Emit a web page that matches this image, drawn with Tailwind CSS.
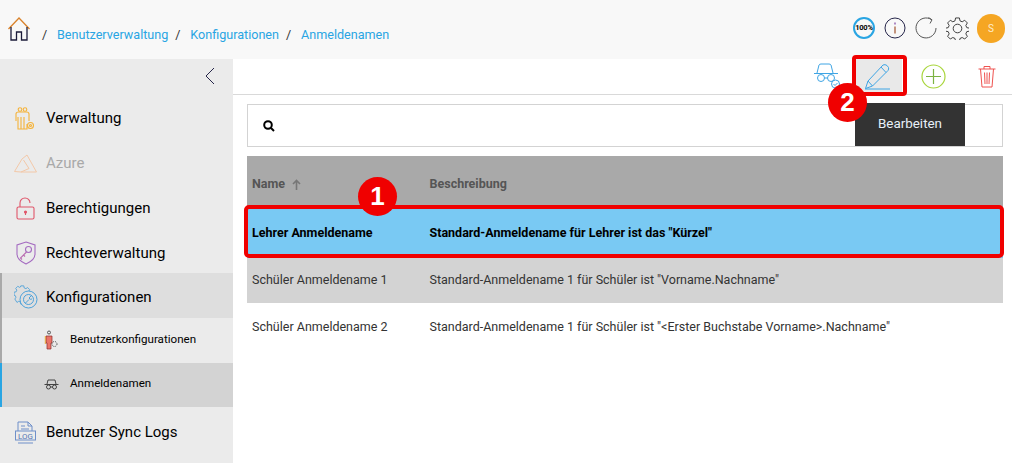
<!DOCTYPE html>
<html lang="de">
<head>
  <meta charset="UTF-8" />
  <title>Anmeldenamen</title>
  <script src="https://cdn.jsdelivr.net/npm/@tailwindcss/browser@4"></script>
</head>
<body class="h-[463px] w-[1012px] overflow-hidden bg-white font-['Roboto',sans-serif] text-black relative">

  <!-- top bar -->
  <header class="h-[59px] bg-[#f8f8f8] flex items-center pl-[8px] pr-[7px]">
    <svg class="w-[22px] h-[24px] -mt-[2px]" viewBox="0 0 22 24" fill="none" stroke-width="1.300">
      <path d="M.5 12 L11 1 L21.500 12" stroke="#d9822b"/>
      <path d="M3 10 V23 H8.500 V15 H13.500 V23 H19 V10" stroke="#1b1b3a"/>
    </svg>
    <nav class="flex items-center text-[12.6px] ml-[12px] mt-[11px]">
      <span class="text-[#333] w-[15px]">/</span>
      <a class="text-[#29a5e3]">Benutzerverwaltung</a>
      <span class="text-[#333] ml-[7px] w-[15px]">/</span>
      <a class="text-[#29a5e3]">Konfigurationen</a>
      <span class="text-[#333] ml-[7px] w-[15px]">/</span>
      <a class="text-[#29a5e3]">Anmeldenamen</a>
    </nav>
    <div class="ml-auto flex items-center gap-[9px] -mt-[3px]">
      <div class="w-[22px] h-[22px] rounded-full border-2 border-[#29a5e3] flex items-center justify-center text-[7.5px] font-bold leading-none tracking-tight">100%</div>
      <svg class="w-[22px] h-[22px]" viewBox="0 0 22 22" fill="none">
        <circle cx="11" cy="11" r="10" stroke="#26264a"/>
        <path d="M11 9.500V16.500" stroke="#a0522d" stroke-width="1.200"/>
        <path d="M11 5.500V7.500" stroke="#7b3fa0" stroke-width="1.200"/>
      </svg>
      <svg class="w-[22px] h-[22px]" viewBox="0 0 22 22" fill="none" stroke="#555">
        <path d="M16.500 2.600 A10 10 0 1 0 21 11"/>
        <path d="M13.500 .5 L17 2.800 L15 6.500" stroke="#5a5a5a"/>
      </svg>
      <svg class="w-[23px] h-[23px]" viewBox="0 0 24 24" fill="none" stroke="#3a3a3a" stroke-width="1">
        <circle cx="12" cy="12" r="4.500"/>
        <path d="M10 1h4l.6 3 2.300 1 2.600-1.600 2.800 2.800-1.600 2.600 1 2.300 3 .6v3l-3 .6-1 2.300 1.600 2.600-2.800 2.800-2.600-1.600-2.300 1-.6 3h-4l-.6-3-2.300-1-2.600 1.600-2.800-2.800 1.600-2.600-1-2.300-3-.6v-3l3-.6 1-2.300-1.600-2.600 2.800-2.800 2.600 1.600 2.300-1z"/>
      </svg>
      <div class="w-[28px] h-[29px] -ml-[1px] rounded-full bg-[#f5a623] text-[#fdeccd] text-[10px] flex items-center justify-center">S</div>
    </div>
  </header>

  <div class="flex h-[404px]">
    <!-- sidebar -->
    <aside class="w-[233px] bg-[#ebebeb] shrink-0">
      <div class="h-[36px] flex items-center justify-end pr-[18px]">
        <svg class="w-[11px] h-[18px] -mt-[3px]" viewBox="0 0 11 18" fill="none" stroke="#26264a"><path d="M10 1 L2 9 L10 17"/></svg>
      </div>

      <a class="h-[45px] pt-[2px] flex items-center pl-[15px] gap-[11px] text-[15px]">
        <svg class="w-[20px] h-[24px]" viewBox="0 0 20 24" fill="none" stroke="#f5b33a" stroke-width="1.100"><circle cx="5" cy="2.500" r="1.800"/><circle cx="10" cy="2.500" r="1.800"/><path d="M1 14V7q0-2 2.500-2h8q2.500 0 2.500 2v7M3 10V22h9V17M6 10v12M9 10v12"/><circle cx="15.500" cy="18.500" r="3"/><circle cx="15.500" cy="18.500" r="1"/></svg>
        Verwaltung
      </a>
      <a class="h-[45px] pt-[2px] flex items-center pl-[14px] gap-[9px] text-[15px] text-[#a9a9a9]">
        <svg class="w-[23px] h-[19px]" viewBox="0 0 23 19" fill="none" stroke="#f3c8a8"><path d="M.5 17.500 L8 5 L13 1 L22.500 18 H7 L15 14.500 L9.500 6 M.5 17.500 L7 18"/></svg>
        Azure
      </a>
      <a class="h-[45px] pt-[2px] flex items-center pl-[16px] gap-[11px] text-[15px]">
        <svg class="w-[19px] h-[23px]" viewBox="0 0 19 23" fill="none" stroke="#e0566a" stroke-width="1.100"><rect x="1" y="10" width="17" height="12" rx="1.500"/><path d="M4 10V6a5 5 0 0 1 10 0"/><circle cx="9.500" cy="15" r="1" fill="#e0566a"/><path d="M9.500 15v3"/></svg>
        Berechtigungen
      </a>
      <a class="h-[43px] pt-[3px] flex items-center pl-[16px] gap-[10px] text-[15px]">
        <svg class="w-[20px] h-[24px]" viewBox="0 0 20 24" fill="none" stroke="#a56cc1" stroke-width="1.100"><path d="M10 1 L19 4 V13 Q19 19 10 23 Q1 19 1 13 V4z"/><circle cx="12.500" cy="8.500" r="3"/><path d="M10.500 11 L4.500 17 L6 18.500 M7.500 14 L9 15.500" stroke="#b86bb0"/></svg>
        Rechteverwaltung
      </a>

      <a class="h-[45px] pt-[3px] flex items-center pl-[12px] gap-[8px] text-[15px] bg-[#dedede] border-l-2 border-[#a9a9a9]">
        <svg class="w-[24px] h-[24px]" viewBox="0 0 24 24" fill="none" stroke="#3b9ad9" stroke-width=".9">
          <path d="M8 1h3.500l.5 2.500 2 .8 2-1.300 2.500 2.500-1.300 2 .8 2 2.500.5v3.500l-2.500.5-.8 2 1.300 2-2.500 2.500-2-1.300-2 .8-.5 2.500H8l-.5-2.500-2-.8-2 1.300L1 16.500l1.300-2-.8-2L0 12V8.500L2.500 8l.8-2L2 4l2.500-2.500 2 1.300 1-.4z" transform="scale(.85)"/>
          <circle cx="14.500" cy="14.500" r="8.500" fill="#dedede"/>
          <circle cx="14.500" cy="14.500" r="5"/>
          <path d="M11.500 18 L15 14.500 M15 13 L17.500 10.500 M15 13 Q16 15 18 14"/>
        </svg>
        Konfigurationen
      </a>
      <a class="h-[45px] pb-[2px] flex items-center pl-[42px] gap-[11px] text-[11.6px] border-l-2 border-[#a9a9a9]">
        <svg class="w-[15px] h-[20px]" viewBox="0 0 15 20" fill="none"><circle cx="5" cy="2.500" r="1.500" stroke="#555"/><path d="M2 6h6v7H7v6H3v-6H2z" fill="#ea7468" stroke="#8a2b2b" stroke-width=".7"/><path d="M1.300 6V14" stroke="#e8a93a"/><circle cx="10.500" cy="14" r="2.500" stroke="#444" stroke-dasharray="1 1"/></svg>
        Benutzerkonfigurationen
      </a>
      <a class="h-[44px] pb-[2px] flex items-center pl-[42px] gap-[11px] text-[11.6px] bg-[#d3d3d3] border-l-2 border-[#29a5e3]">
        <svg class="w-[15px] h-[11px]" viewBox="0 0 15 11" fill="none" stroke="#333" stroke-width=".9"><path d="M3 5 L4 1h7l1 4M.5 5.500h14"/><circle cx="4.500" cy="8" r="2"/><circle cx="10.500" cy="8" r="2"/><path d="M6.500 8h2"/></svg>
        Anmeldenamen
      </a>
      <a class="h-[50px] flex items-center pl-[15px] gap-[10px] text-[15px]">
        <svg class="w-[21px] h-[23px]" viewBox="0 0 21 23" fill="none" stroke="#6f8fc9"><path d="M3 10V1h10l4 4v5M13 1v4h4M6 5h4M6 8h8"/><rect x=".5" y="10" width="20" height="9"/><path d="M3 22h15"/><text x="10.500" y="17.500" font-size="8" text-anchor="middle" stroke="none" fill="#5577b5" font-family="Roboto">LOG</text></svg>
        Benutzer Sync Logs
      </a>
    </aside>

    <!-- content -->
    <main class="flex-1">
      <div class="h-[36px] border-b border-[#d9d9d9] flex items-center">
        <div class="ml-[579px] w-[30px] flex justify-center">
          <svg class="w-[28px] h-[27px]" viewBox="0 0 28 27" fill="none" stroke="#3fa5e4"><path d="M4 10 L6 2q.5-1 2-1h8q1.500 0 2 1l2 8M1 10.500h24"/><circle cx="8" cy="15" r="3.500"/><circle cx="18" cy="15" r="3.500"/><path d="M11.500 15h3"/><circle cx="22.500" cy="21" r="4"/><path d="M20.500 21l1.500 1.500 2.500-2.500"/></svg>
        </div>
        <div class="ml-[10px] w-[50px] h-[36px] bg-[#e9e9e9] flex items-center justify-center -mt-[1px]">
          <svg class="w-[27px] h-[27px]" viewBox="0 0 27 27" fill="none" stroke="#3fa5e4"><path d="M1 26h25"/><path d="M1.500 25.500 L4 18 L19 2 Q21 1 23 2.500 L24.500 4.500 Q25 6 24 7.500 L8.500 23z"/><path d="M17 4 L22 9.500M4 18 L8.500 23"/></svg>
        </div>
        <div class="ml-[19px] w-[26px]">
          <svg class="w-[25px] h-[25px]" viewBox="0 0 25 25" fill="none"><circle cx="12.500" cy="12.500" r="11.500" stroke="#a9d63c" stroke-width="1.200"/><path d="M12.500 5V20M5 12.500H20" stroke="#7cb342" stroke-width="1.200"/></svg>
        </div>
        <div class="ml-[31px]">
          <svg class="w-[18px] h-[23px]" viewBox="0 0 18 23" fill="none" stroke="#ef5350"><path d="M.5 4h17M6 4V1.500h6V4M2.500 4 L4 22h10L15.500 4M6.500 7.500 L7 19M9 7.500V19M11.500 7.500 L11 19"/></svg>
        </div>
      </div>

      <div class="pl-[14px] pr-[9px] pt-[9px]">
        <div class="h-[43px] border border-[#d3d3d3] flex items-center">
          <svg class="ml-[15px] w-[12px] h-[12px]" viewBox="0 0 12 12" fill="none" stroke="#000" stroke-width="2"><circle cx="5" cy="5" r="3.800"/><path d="M8 8 L11 11"/></svg>
          <button class="ml-[580px] h-[43px] w-[110px] -translate-y-[1px] bg-[#333] text-[#e8f0f8] text-[13.4px]">Bearbeiten</button>
        </div>

        <table class="w-full table-fixed mt-[9px] text-[12.5px] border-collapse">
          <thead>
            <tr class="h-[52px] bg-[#a9a9a9] text-[#555] font-bold text-left">
              <th class="w-[182.5px] pl-[5px] pt-[4px]">
                <span class="flex items-center">Name
                  <svg class="ml-[7px] w-[9px] h-[11px]" viewBox="0 0 9 11" fill="none" stroke="#777" stroke-width="1.600"><path d="M4.500 11V1.500M1 5 L4.500 1.500 L8 5"/></svg>
                </span>
              </th>
              <th class="pt-[4px]">Beschreibung</th>
            </tr>
          </thead>
          <tbody>
            <tr class="h-[50px] bg-[#79c9f3] font-bold">
              <td class="pl-[5px]">Lehrer Anmeldename</td>
              <td>Standard-Anmeldename für Lehrer ist das "Kürzel"</td>
            </tr>
            <tr class="h-[45px] bg-[#d3d3d3] text-[#333]">
              <td class="pl-[5px]">Schüler Anmeldename 1</td>
              <td>Standard-Anmeldename 1 für Schüler ist "Vorname.Nachname"</td>
            </tr>
            <tr class="h-[48px] text-[#333]">
              <td class="pl-[5px]">Schüler Anmeldename 2</td>
              <td>Standard-Anmeldename 1 für Schüler ist "&lt;Erster Buchstabe Vorname&gt;.Nachname"</td>
            </tr>
          </tbody>
        </table>
      </div>
    </main>
  </div>

  <!-- annotations over the screenshot -->
  <div class="absolute left-[244px] top-[205px] w-[760px] h-[53px] border-[4px] border-[#f00000] rounded-[5px]"></div>
  <div class="absolute left-[852px] top-[55px] w-[55px] h-[41px] border-[4px] border-[#f00000] rounded-[4px]"></div>
  <div class="absolute left-[358px] top-[177px] w-[39px] h-[39px] rounded-full bg-[#f00000] text-white font-['Liberation_Sans',sans-serif] font-bold text-[26px] flex items-center justify-center">1</div>
  <div class="absolute left-[828px] top-[83px] w-[39px] h-[39px] rounded-full bg-[#f00000] text-white font-['Liberation_Sans',sans-serif] font-bold text-[26px] flex items-center justify-center">2</div>
</body>
</html>
